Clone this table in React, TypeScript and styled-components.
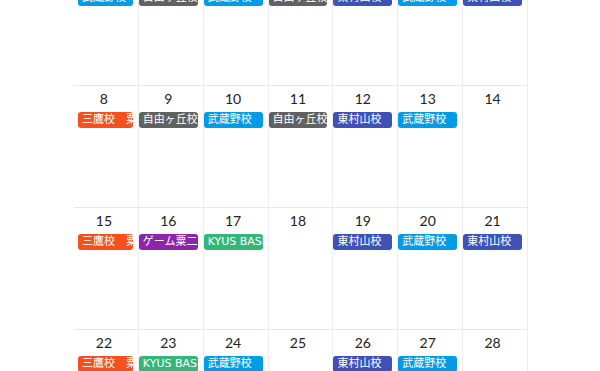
import * as React from "react";
import styled, { createGlobalStyle } from "styled-components";

const GlobalStyle = createGlobalStyle`
  html, body {
    margin: 0;
    padding: 0;
    background: #ffffff;
  }
  body {
    font-family: "Lato", "Noto Sans CJK JP", sans-serif;
  }
`;

const COLORS = {
  tangerine: "#f4511e",
  graphite: "#616161",
  peacock: "#039be5",
  blueberry: "#3f51b5",
  grape: "#8e24aa",
  sage: "#33b679"
};

type Tone = keyof typeof COLORS;

interface CalEvent {
  title: string;
  tone: Tone;
}

interface Day {
  date: number;
  events: CalEvent[];
}

const musashino: CalEvent = { title: "武蔵野校", tone: "peacock" };
const jiyugaoka: CalEvent = { title: "自由ヶ丘校", tone: "graphite" };
const higashi: CalEvent = { title: "東村山校", tone: "blueberry" };
const mitaka: CalEvent = { title: "三鷹校　粟生", tone: "tangerine" };
const game: CalEvent = { title: "ゲーム粟二", tone: "grape" };
const kyus: CalEvent = { title: "KYUS BASE", tone: "sage" };

const weeks: Day[][] = [
  [
    { date: 1, events: [musashino] },
    { date: 2, events: [jiyugaoka] },
    { date: 3, events: [musashino] },
    { date: 4, events: [jiyugaoka] },
    { date: 5, events: [higashi] },
    { date: 6, events: [musashino] },
    { date: 7, events: [higashi] }
  ],
  [
    { date: 8, events: [mitaka] },
    { date: 9, events: [jiyugaoka] },
    { date: 10, events: [musashino] },
    { date: 11, events: [jiyugaoka] },
    { date: 12, events: [higashi] },
    { date: 13, events: [musashino] },
    { date: 14, events: [] }
  ],
  [
    { date: 15, events: [mitaka] },
    { date: 16, events: [game] },
    { date: 17, events: [kyus] },
    { date: 18, events: [] },
    { date: 19, events: [higashi] },
    { date: 20, events: [musashino] },
    { date: 21, events: [higashi] }
  ],
  [
    { date: 22, events: [mitaka] },
    { date: 23, events: [kyus] },
    { date: 24, events: [musashino] },
    { date: 25, events: [] },
    { date: 26, events: [higashi] },
    { date: 27, events: [musashino] },
    { date: 28, events: [] }
  ]
];

const weekdays = ["月", "火", "水", "木", "金", "土", "日"];

const Viewport = styled.div`
  position: relative;
  height: 100vh;
  overflow: hidden;
  padding-left: 2px;
`;

const Calendar = styled.div`
  width: 454px;
  margin: 0 auto;
`;

const WeekdayRow = styled.div`
  display: grid;
  grid-template-columns: repeat(7, 1fr);
  height: 32px;
  align-items: center;
`;

const Weekday = styled.div`
  text-align: center;
  padding-right: 4px;
  font-size: 12px;
  color: #70757a;
`;

const Week = styled.div`
  display: grid;
  grid-template-columns: repeat(7, 1fr);
  height: 122px;
  box-sizing: border-box;
  border-top: 1px solid #e6e6ed;
`;

const Cell = styled.div`
  min-width: 0;
  padding: 3px 5px 0 0;
  border-right: 1px solid #ececf2;
  &:first-child {
    padding-left: 1px;
  }
`;

const DayNumber = styled.div`
  font-family: "Lato", sans-serif;
  font-size: 14px;
  line-height: 20px;
  text-align: center;
  color: #222222;
`;

const EventList = styled.div`
  display: flex;
  flex-direction: column;
  gap: 2px;
  margin-top: 3px;
`;

const EventBar = styled.div<{ $tone: Tone; $inset: boolean }>`
  height: 16px;
  line-height: 16px;
  margin-left: ${({ $inset }) => ($inset ? "3px" : "0")};
  padding: 0 4px;
  border-radius: 3px;
  background: ${({ $tone }) => COLORS[$tone]};
  color: #ffffff;
  font-family: "DejaVu Sans", "Noto Sans CJK JP", sans-serif;
  font-size: 11px;
  white-space: nowrap;
  text-overflow: clip;
  overflow: hidden;
`;

export default function App(): React.ReactElement {
  const viewRef = React.useRef<HTMLDivElement>(null);
  const anchorRef = React.useRef<HTMLDivElement>(null);

  // the shot shows the month scrolled down to the second week
  React.useLayoutEffect(() => {
    if (viewRef.current && anchorRef.current) {
      viewRef.current.scrollTop = anchorRef.current.offsetTop - 85;
    }
  }, []);

  return (
    <Viewport ref={viewRef}>
      <GlobalStyle />
      <Calendar>
        <WeekdayRow>
          {weekdays.map((w) => (
            <Weekday key={w}>{w}</Weekday>
          ))}
        </WeekdayRow>
        {weeks.map((week, i) => (
          <Week key={i} ref={i === 1 ? anchorRef : undefined}>
            {week.map((day, col) => (
              <Cell key={day.date}>
                <DayNumber>{day.date}</DayNumber>
                <EventList>
                  {day.events.map((ev, k) => (
                    <EventBar key={k} $tone={ev.tone} $inset={col === 0}>
                      {ev.title}
                    </EventBar>
                  ))}
                </EventList>
              </Cell>
            ))}
          </Week>
        ))}
      </Calendar>
    </Viewport>
  );
}
